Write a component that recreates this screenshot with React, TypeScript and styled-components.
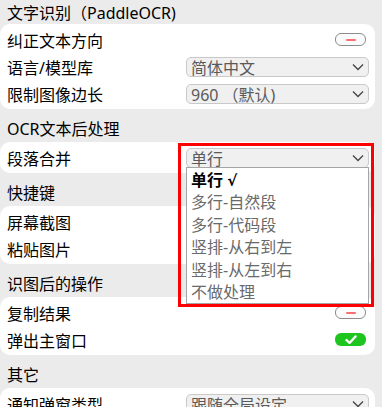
import React from 'react';
import styled, {createGlobalStyle} from "styled-components";

const GlobalStyle = createGlobalStyle`
    body {
      margin: 0;
      background-color: #ebebeb;
      font-family: "Noto Sans", "Noto Sans CJK SC", sans-serif;
      font-size: 16px;
      color: #000;
    }
`;

const Page = styled.div`
    width: 375px;
    display: flex;
    flex-direction: column;
`;

const SectionTitle = styled.div<{ $first?: boolean }>`
    height: ${p => p.$first ? '24px' : '33px'};
    padding: ${p => p.$first ? '0' : '5px'} 0 0 7px;
    box-sizing: border-box;
    display: flex;
    align-items: center;
    white-space: nowrap;
`;

const Card = styled.div`
    background-color: white;
    border-radius: 10px;
    padding: 2px 6px 2px 7px;
    display: flex;
    flex-direction: column;
`;

const Row = styled.div`
    height: 27px;
    display: flex;
    align-items: center;
    justify-content: space-between;
`;

const Label = styled.div`
    white-space: nowrap;
`;

const Select = styled.div`
    width: 183px;
    height: 20px;
    box-sizing: border-box;
    border: 1px solid #c9c9c9;
    border-radius: 5px;
    background-color: #f0f0f0;
    color: #5a5a5a;
    display: flex;
    align-items: center;
    justify-content: space-between;
    padding: 0 4px 0 4px;
    white-space: nowrap;
`;

const Toggle = styled.div<{ $on?: boolean }>`
    width: 31px;
    height: 13px;
    margin-right: 3px;
    box-sizing: border-box;
    border-radius: 6px;
    border: ${p => p.$on ? 'none' : '1.5px solid #8c8c8c'};
    background-color: ${p => p.$on ? '#1ec51e' : '#fbfbfb'};
    display: flex;
    align-items: center;
    justify-content: center;
`;

const Dash = styled.div`
    width: 10px;
    height: 2px;
    background-color: #ff6e6e;
    border-radius: 1px;
`;

const DropWrap = styled.div`
    position: relative;
`;

const Highlight = styled.div`
    position: absolute;
    top: -5px;
    left: -8px;
    right: -5px;
    border: 3px solid #ff0000;
    padding: 21px 2px 0 5px;
    z-index: 10;
`;

const List = styled.div`
    background-color: white;
    border: 1px solid #a5a5a5;
    display: flex;
    flex-direction: column;
`;

const Item = styled.div<{ $active?: boolean }>`
    height: 22.5px;
    line-height: 25px;
    padding-left: 4px;
    color: ${p => p.$active ? '#000' : '#6a6a6a'};
    font-weight: ${p => p.$active ? 'bold' : 'normal'};
    white-space: nowrap;
`;

const Tick = styled.span`
    font-family: "DejaVu Sans", sans-serif;
    font-size: 15px;
`;

const Chevron = () => (
    <svg width="12" height="8" viewBox="0 0 12 8">
        <path d="M1 1.5 L6 6.5 L11 1.5" fill="none" stroke="#444" strokeWidth="1.3"/>
    </svg>
);

const Check = () => (
    <svg width="12" height="10" viewBox="0 0 12 10">
        <path d="M1.5 5 L4.5 8 L10.5 1.5" fill="none" stroke="white" strokeWidth="2.4" strokeLinecap="round" strokeLinejoin="round"/>
    </svg>
);

const modes = ["多行-自然段", "多行-代码段", "竖排-从右到左", "竖排-从左到右", "不做处理"];

function App() {
  return (
      <>
          <GlobalStyle/>
          <Page>
              <SectionTitle $first>文字识别（PaddleOCR)</SectionTitle>
              <Card>
                  <Row>
                      <Label>纠正文本方向</Label>
                      <Toggle><Dash/></Toggle>
                  </Row>
                  <Row>
                      <Label>语言/模型库</Label>
                      <Select>简体中文<Chevron/></Select>
                  </Row>
                  <Row>
                      <Label>限制图像边长</Label>
                      <Select>960 （默认)<Chevron/></Select>
                  </Row>
              </Card>

              <SectionTitle>OCR文本后处理</SectionTitle>
              <Card>
                  <Row>
                      <Label>段落合并</Label>
                      <DropWrap>
                          <Select>单行<Chevron/></Select>
                          <Highlight>
                              <List>
                                  <Item $active>单行 <Tick>√</Tick></Item>
                                  {modes.map(m => <Item key={m}>{m}</Item>)}
                              </List>
                          </Highlight>
                      </DropWrap>
                  </Row>
              </Card>

              <SectionTitle>快捷键</SectionTitle>
              <Card>
                  <Row><Label>屏幕截图</Label></Row>
                  <Row><Label>粘贴图片</Label></Row>
              </Card>

              <SectionTitle>识图后的操作</SectionTitle>
              <Card>
                  <Row>
                      <Label>复制结果</Label>
                      <Toggle><Dash/></Toggle>
                  </Row>
                  <Row>
                      <Label>弹出主窗口</Label>
                      <Toggle $on><Check/></Toggle>
                  </Row>
              </Card>

              <SectionTitle>其它</SectionTitle>
              <Card>
                  <Row>
                      <Label>通知弹窗类型</Label>
                      <Select>跟随全局设定<Chevron/></Select>
                  </Row>
              </Card>
          </Page>
      </>
  );
}

export default App;
